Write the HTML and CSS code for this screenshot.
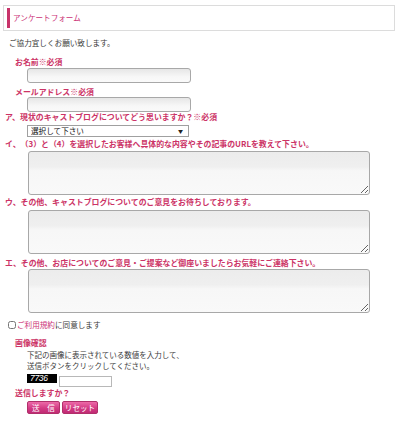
FILE: index.html
```html
<!DOCTYPE html>
<html lang="ja">
<head>
<meta charset="utf-8">
<link rel="stylesheet" href="styles.css">
</head>
<body>
<div class="page">
  <div class="head"><h1 class="title">アンケートフォーム</h1></div>
  <p class="intro">ご協力宜しくお願い致します。</p>
  <div class="form">
    <div class="lbl lbl1 ind">お名前※必須</div>
    <input class="txt inp1" type="text">
    <div class="lbl lbl2 ind">メールアドレス※必須</div>
    <input class="txt inp2" type="text">
    <div class="lbl lblA">ア、現状のキャストブログについてどう思いますか？※必須</div>
    <div class="selwrap">
      <select class="sel"><option>選択して下さい</option></select>
      <span class="arrow">▼</span>
    </div>
    <div class="lbl lblI">イ、（3）と（4）を選択したお客様へ具体的な内容やその記事のURLを教えて下さい。</div>
    <textarea class="ta ta1"></textarea>
    <div class="lbl lblU">ウ、その他、キャストブログについてのご意見をお待ちしております。</div>
    <textarea class="ta ta2"></textarea>
    <div class="lbl lblE">エ、その他、お店についてのご意見・ご提案など御座いましたらお気軽にご連絡下さい。</div>
    <textarea class="ta ta3"></textarea>
    <div class="agree"><input class="chk" type="checkbox"><span class="link">ご利用規約</span>に同意します</div>
    <div class="lbl lblImg ind">画像確認</div>
    <p class="note">下記の画像に表示されている数値を入力して、<br>送信ボタンをクリックしてください。</p>
    <div class="captcha"><span class="code">7736</span><input class="capinp" type="text"></div>
    <div class="lbl lblSend ind">送信しますか？</div>
    <div class="btns"><button class="btn b1">送　信</button><button class="btn b2">リセット</button></div>
  </div>
</div>
</body>
</html>
```
FILE: styles.css
```css
* { box-sizing: border-box; }
html, body { margin: 0; padding: 0; background: #fff; }
body {
  font-family: "Noto Sans CJK JP", "Noto Sans", sans-serif;
  color: #444;
  width: 400px;
  height: 425px;
  overflow: hidden;
}
.page { padding: 5px 5px 0 3px; }
.head {
  height: 26px;
  border: 1px solid #dcdcdc;
  padding: 2px 3px;
}
.title {
  margin: 0;
  height: 20px;
  border-left: 3px solid #c8336a;
  padding-left: 3px;
  font-size: 7.6px;
  line-height: 20px;
  font-weight: normal;
  color: #cc3377;
}
.intro {
  margin: 6px 0 0 6px;
  font-size: 7.6px;
  line-height: 12px;
  color: #3a3a3a;
}
.form {
  display: flex;
  flex-direction: column;
  align-items: flex-start;
}
.lbl {
  font-size: 7.9px;
  line-height: 10px;
  height: 10px;
  color: #cc3366;
  font-weight: 600;
  margin-left: 2px;
  white-space: nowrap;
}
.ind { margin-left: 12px; }
.lbl1 { margin-top: 8px; }
.lbl2 { margin-top: 4px; }
.lblA { margin-top: 0; }
.lblI { margin-top: 2px; }
.lblU { margin-top: 2px; }
.lblE { margin-top: 4px; }
.txt {
  margin: 0 0 0 24px;
  width: 164px;
  height: 15px;
  border: 1px solid #a8a8a8;
  border-radius: 3px;
  background: linear-gradient(#e6e6e6, #f7f7f7 60%, #fafafa);
  padding: 0 3px;
  font-size: 8px;
}
.inp1 { margin-top: 1px; }
.inp2 { margin-top: 0; }
.selwrap {
  position: relative;
  margin: 3px 0 0 24px;
  width: 162px;
  height: 12px;
}
.sel {
  appearance: none;
  -webkit-appearance: none;
  width: 162px;
  height: 12px;
  border: 1px solid #a0a0a0;
  border-radius: 0;
  background: #fff;
  padding: 0 0 0 3px;
  font-family: "Noto Sans CJK JP", sans-serif;
  font-size: 7.6px;
  line-height: 10px;
  color: #111;
  display: block;
}
.arrow {
  position: absolute;
  right: 6px;
  top: 2px;
  font-size: 5px;
  line-height: 8px;
  color: #222;
}
.ta {
  margin: 2px 0 0 25px;
  width: 342px;
  height: 44px;
  border: 1px solid #a8a8a8;
  border-radius: 3px;
  background: linear-gradient(#ececec, #efefef 35%, #f7f7f7 45%, #f9f9f9);
  display: block;
}
.ta2 { margin-top: 3px; }
.ta3 { margin-top: 1px; }
.agree {
  margin: 6px 0 0 5px;
  font-size: 7.6px;
  line-height: 12px;
  display: flex;
  align-items: center;
  color: #3a3a3a;
}
.chk {
  margin: 0 1px 0 0;
  width: 8px;
  height: 8px;
}
.link { color: #cc3377; }
.lblImg { margin-top: 7px; }
.note {
  margin: 1px 0 0 24px;
  font-size: 7.5px;
  line-height: 11px;
  color: #3a3a3a;
}
.captcha {
  margin: 3px 0 0 24px;
  height: 13px;
  display: flex;
  align-items: flex-start;
  gap: 2px;
}
.code {
  width: 30px;
  height: 9px;
  background: #000;
  color: #fff;
  font-family: "Liberation Sans", sans-serif;
  font-size: 8.5px;
  font-style: italic;
  line-height: 9px;
  padding-left: 3px;
  letter-spacing: -0.3px;
}
.capinp {
  margin: 2px 0 0 0;
  width: 53px;
  height: 11px;
  border: 1px solid #b8b8b8;
  background: #fff;
  padding: 0;
}
.lblSend { margin-top: 1px; }
.btns {
  margin: 3px 0 0 24px;
  display: flex;
  gap: 2px;
}
.btn {
  height: 13px;
  padding: 0;
  border: 1px solid #b0306a;
  border-radius: 2px;
  background: linear-gradient(#ec6aa8, #d43c85 55%, #c02a74);
  color: #fff;
  font-family: "Noto Sans CJK JP", sans-serif;
  font-size: 7.6px;
  line-height: 11px;
}
.b1 { width: 33px; }
.b2 { width: 36px; }
```
